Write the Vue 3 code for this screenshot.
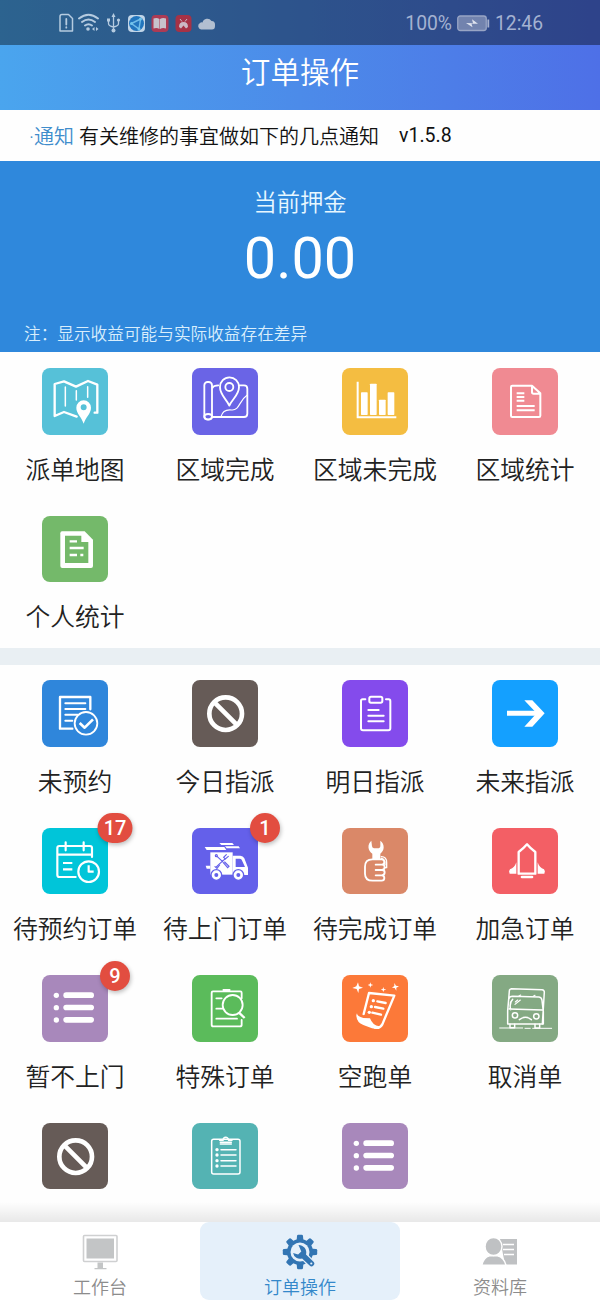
<script setup>
const W = 'fill="none" stroke="#fff" stroke-linecap="round" stroke-linejoin="round"'

const ban = `<g ${W} stroke-width="14"><circle cx="101" cy="101" r="49"/><path d="M68 68 L134 134"/></g>`

const list = `<g fill="#fff"><circle cx="43" cy="61" r="8"/><circle cx="43" cy="98" r="8"/><circle cx="43" cy="135" r="8"/>
<rect x="64" y="52" width="92" height="17" rx="8.5"/><rect x="64" y="89" width="92" height="17" rx="8.5"/><rect x="64" y="126" width="92" height="17" rx="8.5"/></g>`

const icons = {
  map: `<g ${W} stroke-width="7"><path d="M104 146 L66 132 L38 144 V48 L66 40 L102 56 L138 39 L166 50 V134 H158"/>
    <path stroke-width="4.500" d="M70 57 V114 M103 68 V96 M137 56 V88"/></g>
    <path fill="#fff" fill-rule="evenodd" d="M125 167 C119 147 103 137 103 119 A22 22 0 0 1 147 119 C147 137 131 147 125 167 Z M125 109 A9 9 0 1 0 125 127 A9 9 0 1 0 125 109 Z"/>`,
  route: `<g ${W} stroke-width="5.5"><rect x="37" y="42" width="23" height="113" rx="10"/><ellipse cx="48.500" cy="146" rx="11.500" ry="8"/>
    <path d="M62 59 Q65 52 79 52 M142 52 H156 Q166 52 166 62 V137 Q166 147 156 147 H61"/>
    <path d="M112 113 C105 95 84 82 84 57 A28.500 29 0 0 1 141 57 C141 82 119 95 112 113 Z"/><circle cx="112" cy="57" r="12"/>
    <path stroke-width="3.500" d="M87 146 C92 128 104 124 119 126 C143 128 140 99 165 82"/></g>`,
  chart: `<path fill="none" stroke="#fff" stroke-width="6" d="M47 41 V148 H163"/>
    <g fill="#fff"><rect x="57" y="73" width="20" height="68" rx="2"/><rect x="84" y="47" width="20" height="94" rx="2"/><rect x="111" y="95" width="20" height="46" rx="2"/><rect x="137" y="73" width="20" height="68" rx="2"/></g>`,
  sheet: `<g ${W} stroke-width="6"><path d="M120 53 H61 Q57 53 57 57 V143 Q57 147 61 147 H141 Q145 147 145 143 V76 Z M120 53 V72 Q120 77 125 77 H145"/>
    <path stroke-linecap="butt" d="M74 76 H97 M74 87 H97 M74 98 H97 M74 114 H128 M74 127 H128"/></g>`,
  report: `<path fill="#fff" d="M60 46 H128 L153 71 V150 Q153 156 147 156 H61 Q55 156 55 150 V52 Q55 46 60 46 Z"/>
    <path fill="#74b96a" d="M69 59 H118 V78 H139 V141 H69 Z"/><path fill="none" stroke="#fff" stroke-width="7" d="M83 76 H105 M83 96 H125 M83 117 H105 M115 117 H124"/>`,
  booked: `<g ${W} stroke-width="7"><path d="M91 146 H54 V51 H145 V88"/><path stroke-width="6" d="M70 70 H130 M70 87 H130 M70 104 H107 M70 122 H91"/>
    <circle cx="132" cy="130" r="34" stroke-width="5.500"/><path stroke-width="8" stroke-linecap="butt" d="M113 129 L128 143 L153 118"/></g>`,
  ban,
  list,
  clip: `<g ${W} stroke-width="6"><path d="M70 58 H62 Q57 58 57 63 V145 Q57 151 63 151 H139 Q145 151 145 145 V63 Q145 58 140 58 H132"/>
    <rect x="82" y="50" width="39" height="18" rx="5"/><path d="M79 90 H110 M79 107 H125 M79 124 H125"/></g>`,
  arrow: `<path fill="none" stroke="#fff" stroke-width="15" d="M45 100 H147"/><path fill="#fff" d="M97 61 H121 L158 100 L121 140 H97 L134 100 Z"/>`,
  calendar: `<g ${W} stroke-width="6.5"><path d="M101 147 H52 Q46 147 46 141 V60 Q46 54 52 54 H144 Q150 54 150 60 V87 M47 80 H149 M71 43 V67 M125 43 V67"/>
    <path stroke-linecap="butt" d="M63 105 H91 M63 124 H91"/><circle cx="140" cy="131" r="31"/><path stroke-linecap="butt" d="M140 112 V131 H155"/></g>`,
  truck: `<g fill="#fff"><path d="M38 57 H97 L103 66 H44 Z M82 45 H121 L126 51 H88 Z M99 55 H140 L144 61 H104 Z M41 113 H55 V122 H44 Z"/>
    <path d="M55 73 H122 V140 H55 Z"/><path fill-rule="evenodd" d="M122 83 H145 Q153 83 157 91 L168 119 V141 H122 Z M131 92 V117 H159 L149 95 Q147 92 143 92 Z"/>
    <g stroke="#6460ea" stroke-width="4"><circle cx="73" cy="141" r="16"/><circle cx="139" cy="141" r="16"/></g></g>
    <g fill="#6460ea"><circle cx="73" cy="141" r="6"/><circle cx="139" cy="141" r="6"/></g>
    <g fill="none" stroke="#6460ea" stroke-linecap="round" stroke-width="3.500"><path d="M73 117 L80 110 L100 92 M76 86 L92 101 M94 104 L107 119 L111 115 L98 102"/>
    <path d="M109 85 L100 93 L95 88 L103 80 M69 116 L75 121 L83 111"/><circle cx="73" cy="83" r="3"/></g>`,
  wrench: `<path fill="#fff" d="M88 38 A24 24 0 0 0 91 77 V93 H115 V77 A24 24 0 0 0 115 38 V55 Q115 60 110 61 H96 Q90 60 90 54 Z"/>
    <g ${W} stroke-width="5.5"><path fill="#da8868" d="M122 94 H91 Q69 94 69 116 V137 Q69 158 92 158 H119 Q127 158 127 150 Q127 142 119 142 H101 M119 142 Q128 142 128 133 Q128 126 119 126 H101 M119 126 Q128 126 128 117 Q128 110 119 110 H101 M119 110 Q127 110 127 102 Q127 94 119 94"/>
    <path stroke-width="4" d="M118 86 Q134 86 134 104 V119 H128 M118 91 Q130 94 129 110"/></g>`,
  rocket: `<path ${W} stroke-width="7" d="M105 49 Q95 61 80 72 V137 H130 V72 Q115 61 105 49 Z"/>
    <g fill="#fff"><path d="M73 103 V137 H53 Q49 129 54 124 Q68 119 73 103 Z M137 103 V137 H157 Q161 129 156 124 Q142 119 137 103 Z"/><rect x="86" y="143" width="38" height="8" rx="4"/></g>`,
  search: `<g ${W} stroke-width="5.5"><path d="M149 70 V53 Q149 49 145 49 H63 Q59 49 59 53 V149 Q59 154 64 154 H144 Q149 154 149 149 V135"/>
    <path d="M73 70 H89 M73 101 H91 M73 131 H135"/><circle cx="122" cy="90" r="30"/><path stroke-width="7" stroke-linecap="butt" d="M141 113 L158 129"/></g><path fill="#fff" d="M92 42 H115 V49 H92 Z"/>`,
  scroll: `<path ${W} stroke-width="7" d="M65 117 L81 54 L157 62 L121 148 Q114 161 99 158"/>
    <path fill="#fff" d="M45 115 Q45 124 64 129 L84 130 Q92 152 112 154 Q106 164 90 160 L64 150 Q43 142 43 120 Z"/>
    <g ${W} stroke-width="7"><path d="M106 79 L131 84 M99 96 L124 101 M91 113 L117 119"/></g>
    <g fill="#fff"><circle cx="94" cy="77" r="5"/><circle cx="88" cy="95" r="5"/><circle cx="82" cy="112" r="5"/>
    <path d="M48 22 L51 34 L63 38 L51 42 L49 54 L44 42 L31 39 L43 34 Z M85 22 L87 28 L94 30 L87 32 L85 38 L83 32 L77 30 L83 28 Z M124 36 L126 42 L133 44 L126 46 L124 51 L122 46 L116 44 L122 42 Z M157 24 L162 32 L171 34 L163 38 L163 47 L158 39 L150 38 L157 33 Z"/></g>`,
  bus: `<g ${W} stroke-width="4.5"><path d="M50 73 L52 48 Q52 42 58 41 L150 44 Q157 45 157 51 L151 148 M50 73 Q52 64 62 64 L141 66 Q149 67 150 76 L154 110 V147 H47 V107 Z M52 102 L151 105 M56 104 Q51 83 62 73"/>
    <circle cx="69" cy="121" r="8"/><circle cx="133" cy="124" r="8"/><path d="M82 134 Q101 120 118 134 M54 148 V158 H68 V148 M129 148 V159 H143 V148"/>
    <path stroke-width="3.500" d="M69 88 L85 75 M70 81 L77 75 M81 63 L86 60 M124 64 L129 61"/><path stroke-width="3" d="M23 159 H92 M99 160 H115 M122 160 H179"/></g>`,
  checklist: `<g ${W} stroke-width="4.5"><rect x="59" y="49" width="85" height="104" rx="6"/><path d="M83 52 H93 Q94 43 101 43 Q108 43 110 52 H120 M85 58 H118 M85 63 H118"/>
    <path d="M87 80 H132 M87 96 H132 M87 113 H132 M87 129 H132"/></g><g fill="#fff"><circle cx="75" cy="80" r="5"/><circle cx="75" cy="96" r="5"/><circle cx="75" cy="113" r="5"/><circle cx="75" cy="129" r="5"/></g>`
}

const groups = [
  [
    { label: '派单地图', icon: 'map', color: '#56c1d8' },
    { label: '区域完成', icon: 'route', color: '#6a64e6' },
    { label: '区域未完成', icon: 'chart', color: '#f4bd41' },
    { label: '区域统计', icon: 'sheet', color: '#f08a92' },
    { label: '个人统计', icon: 'report', color: '#74b96a' }
  ],
  [
    { label: '未预约', icon: 'booked', color: '#2f86db' },
    { label: '今日指派', icon: 'ban', color: '#665b57' },
    { label: '明日指派', icon: 'clip', color: '#844bec' },
    { label: '未来指派', icon: 'arrow', color: '#14a0ff' },
    { label: '待预约订单', icon: 'calendar', color: '#00c5d9', badge: 17 },
    { label: '待上门订单', icon: 'truck', color: '#6460ea', badge: 1 },
    { label: '待完成订单', icon: 'wrench', color: '#da8868' },
    { label: '加急订单', icon: 'rocket', color: '#f35f65' },
    { label: '暂不上门', icon: 'list', color: '#a888bb', badge: 9 },
    { label: '特殊订单', icon: 'search', color: '#5bbb5b' },
    { label: '空跑单', icon: 'scroll', color: '#fc7939' },
    { label: '取消单', icon: 'bus', color: '#84a983' },
    { label: '', icon: 'ban', color: '#665b57' },
    { label: '', icon: 'checklist', color: '#54b3b3' },
    { label: '', icon: 'list', color: '#a888bb' }
  ]
]
const teeth = [0, 45, 90, 135, 180, 225, 270, 315]
</script>

<template>
  <div class="page">
    <header class="header">
      <div class="status">
        <svg class="status-icons" width="160" height="22" viewBox="0 0 160 22">
          <g fill="none" stroke="#b5cbe0" stroke-width="1.500" stroke-linecap="round" stroke-linejoin="round">
            <path d="M3 2.500h6.500l4 4v12.500h-12.500v-14.500q0-2 2-2z" />
            <path d="M7.300 7v5.500M7.300 15.200v.5" stroke-width="1.800" />
            <path d="M20 6.500q9.500-7.500 19 0M23 10q6.500-5 13 0M26 13.500q3.500-2.700 7 0" stroke-width="1.900" />
            <path d="M54.500 4v14.500M49.500 8v3.500q0 2.500 5 3.500M59.500 8v3.500q0 2.500-5 3.500" stroke-width="1.300" />
          </g>
          <g fill="#b5cbe0">
            <circle cx="29" cy="17" r="1.800" /><path d="M33 17l2.500-2v4zM39.500 17l-2.500-2v4z" />
            <path d="M54.500 1l2 4h-4zM48 6.500h3v3h-3z" /><circle cx="59.500" cy="8" r="1.600" /><circle cx="54.500" cy="18.500" r="2" />
          </g>
          <rect x="69" y="3" width="17" height="17" rx="4" fill="#c0d4e7" />
          <circle cx="77.500" cy="11.500" r="7.500" fill="#2175bd" />
          <path d="M72.500 11.500l9-4.500-1.500 10z" fill="none" stroke="#72bde8" stroke-width="1.400" />
          <circle cx="72.500" cy="11.500" r="1.500" fill="#72c5ec" /><circle cx="81.500" cy="7" r="1.500" fill="#72c5ec" /><circle cx="80" cy="17" r="1.500" fill="#72c5ec" />
          <rect x="92.500" y="3" width="17" height="17" rx="4" fill="#ad3b54" />
          <path d="M94.500 6.500q3.500-1 6 .5v10q-2.500-1.500-6-.5zM101 7q2.500-1.500 6-.5v10q-3.500-1-6 .5z" fill="#c7c3cc" />
          <rect x="116.500" y="3" width="16" height="17" rx="4" fill="#a63246" />
          <path d="M120 15q0-5 4.500-5t4.500 5l-2 1.500-2.500-3-2.500 3z" fill="#ccb9c5" /><path d="M121 7l2 2.500M128 7l-2 2.500" stroke="#ccb9c5" />
          <path d="M142 17.500a3.500 3.500 0 0 1-1-6.500q1-1 2.500-.5a5 5 0 0 1 9-1.500q4 0 3.500 5 0 3.500-3 3.500z" fill="#b2bfd1" />
        </svg>
        <div class="status-right">
          <span>100%</span>
          <svg width="33" height="17" viewBox="0 0 33 17">
            <rect x=".75" y="1" width="28.500" height="14.500" rx="2.500" fill="#7283ae" stroke="#98a5c5" stroke-width="1.300" />
            <path d="M9 8l7 .2-1-4 6 4.600-6.500-.1 1 3.600z" fill="#dfe3ee" /><path d="M31.300 4.500v8" stroke="#a6b1ce" stroke-width="1.800" />
          </svg>
          <span>12:46</span>
        </div>
      </div>
      <h1>订单操作</h1>
    </header>

    <div class="notice"><span class="tag">·通知</span><span>有关维修的事宜做如下的几点通知</span><span class="version">v1.5.8</span></div>

    <section class="deposit">
      <div class="deposit-title">当前押金</div>
      <div class="amount">0.00</div>
      <div class="note">注：显示收益可能与实际收益存在差异</div>
    </section>

    <section v-for="(group, g) in groups" :key="g" class="grid" :class="{ orders: g === 1 }">
      <div v-for="(item, i) in group" :key="i" class="cell">
        <div class="tile" :style="{ background: item.color }">
          <svg viewBox="0 0 200 200" v-html="icons[item.icon]"></svg>
          <span v-if="item.badge" class="badge" :class="{ wide: item.badge > 9 }">{{ item.badge }}</span>
        </div>
        <div class="label">{{ item.label }}</div>
      </div>
    </section>

    <nav class="tabs">
      <div class="tab">
        <svg width="36" height="36" viewBox="0 0 36 36">
          <rect x="1.500" y="1.500" width="33.500" height="26" rx="1" fill="#fff" stroke="#cfd0d1" stroke-width="1.600" />
          <path d="M4.500 4.500h27.500v20h-27.500z" fill="#c3c5c6" /><path d="M15.500 28.500h5.500v5.500h3.500v1.300h-12v-1.300h3z" fill="#c3c5c6" />
        </svg>
        <span>工作台</span>
      </div>
      <div class="tab active">
        <svg width="36" height="36" viewBox="0 0 36 36">
          <g fill="#3275b3">
            <path v-for="a in teeth" :key="a" :transform="`rotate(${a} 18 18)`" d="M14.500 8L15 2Q15.100.8 16.300.8H19.700Q20.900.8 21 2L21.500 8Z" />
            <circle cx="18" cy="18" r="13" />
          </g>
          <circle cx="18" cy="18" r="9.500" fill="#e5f0fa" />
          <path d="M19 19l10.500 11" stroke="#e5f0fa" stroke-width="8" stroke-linecap="round" />
          <path d="M16.500 11a7.500 7.500 0 0 1 7.500 9.500l7.500 7.300a2.600 2.600 0 0 1-3.900 3.700l-7.500-7a7 7 0 0 1-9-5.500l5 1.500 3.200-3z" fill="#3275b3" />
          <circle cx="29.300" cy="29.500" r="1.100" fill="#e5f0fa" />
        </svg>
        <span>订单操作</span>
      </div>
      <div class="tab">
        <svg width="36" height="36" viewBox="0 0 36 36">
          <path d="M18 5h17v25.500H23z" fill="#bfc1c3" />
          <path d="M21 10.500h11M21 15.500h11M22 20.500h10" stroke="#fff" stroke-width="1.700" />
          <g fill="#bfc1c3" stroke="#fff" stroke-width="1.400"><path d="M-.2 31.200q1.700-8 7.700-9.500h8q6.500 1.500 8.500 9.500z" /><ellipse cx="11.500" cy="12.500" rx="8.500" ry="9" /></g>
        </svg>
        <span>资料库</span>
      </div>
    </nav>
  </div>
</template>

<style>
body {
  margin: 0;
}
</style>

<style scoped>
.page {
  position: relative;
  display: flex;
  flex-direction: column;
  width: 600px;
  height: 1300px;
  overflow: hidden;
  background: #fefefe;
  color: #222;
  font-family: Roboto, "Noto Sans CJK SC", sans-serif;
  font-weight: 350;
}
.header {
  flex: none;
  height: 110px;
  background: linear-gradient(90deg, #4aa5ee, #4c8be9 50%, #4e70e7);
}
.status {
  box-sizing: border-box;
  height: 45px;
  padding: 1px 57px 0 59px;
  display: flex;
  align-items: center;
  justify-content: space-between;
  background: rgba(0, 0, 0, 0.4);
}
.status-right {
  display: flex;
  align-items: center;
  gap: 5px;
  color: #a4b2d1;
  font-size: 19.3px;
  font-weight: 400;
}
h1 {
  margin: 0;
  padding-top: 1px;
  height: 54px;
  line-height: 54px;
  text-align: center;
  color: #fff;
  font-size: 29.6px;
  font-weight: 350;
}
.notice {
  flex: none;
  box-sizing: border-box;
  height: 51px;
  padding-left: 29px;
  display: flex;
  align-items: center;
  font-size: 20px;
  color: #111;
  white-space: nowrap;
}
.tag {
  width: 50px;
  color: #3f8dcc;
}
.version {
  margin-left: 20px;
  font-size: 19.5px;
  font-weight: 400;
}
.deposit {
  flex: none;
  height: 191px;
  background: #2f88dc;
  color: #fff;
  text-align: center;
}
.deposit-title {
  padding-top: 25px;
  height: 34px;
  line-height: 34px;
  font-size: 23.3px;
  color: #e7f7ff;
}
.amount {
  height: 78px;
  line-height: 78px;
  font-size: 57.6px;
  font-weight: 400;
}
.note {
  padding: 24px 0 0 24px;
  line-height: 26px;
  text-align: left;
  font-size: 16.67px;
  color: #d9eefc;
}
.grid {
  flex: none;
  box-sizing: border-box;
  height: 296px;
  padding-top: 16.3px;
  display: grid;
  grid-template-columns: repeat(4, 150px);
  grid-auto-rows: 147.5px;
}
.orders {
  height: 574px;
  padding-top: 15px;
  border-top: 17px solid #e9eff3;
}
.cell {
  display: flex;
  flex-direction: column;
  align-items: center;
}
.tile {
  position: relative;
  width: 66.67px;
  height: 66.67px;
  border-radius: 8px;
}
.tile svg {
  display: block;
  width: 100%;
  height: 100%;
}
.label {
  margin-top: 16px;
  line-height: 40px;
  font-size: 24.8px;
  white-space: nowrap;
}
.badge {
  position: absolute;
  left: calc(100% + 6.7px);
  top: 0.5px;
  transform: translate(-50%, -50%);
  width: 30px;
  height: 30px;
  line-height: 31px;
  border-radius: 15px;
  background: #e24d40;
  color: #fff;
  text-align: center;
  font-size: 20px;
  font-weight: 500;
  box-shadow: 1px 2px 4px rgba(0, 0, 0, 0.25);
}
.badge.wide {
  width: 35px;
}
.tabs {
  position: relative;
  flex: none;
  height: 78px;
  display: flex;
  background: #fff;
}
.tabs::before {
  content: "";
  position: absolute;
  left: 0;
  right: 0;
  bottom: 100%;
  height: 20px;
  background: linear-gradient(rgba(0, 0, 0, 0), rgba(0, 0, 0, 0.085));
}
.tab {
  width: 200px;
  display: flex;
  flex-direction: column;
  align-items: center;
  padding-top: 12px;
  box-sizing: border-box;
  border-radius: 9px;
  color: #8c8c8c;
  font-size: 18px;
  line-height: 35px;
}
.tab svg {
  flex: none;
}
.tab.active {
  background: #e5f0fa;
  color: #3488ca;
}
</style>
